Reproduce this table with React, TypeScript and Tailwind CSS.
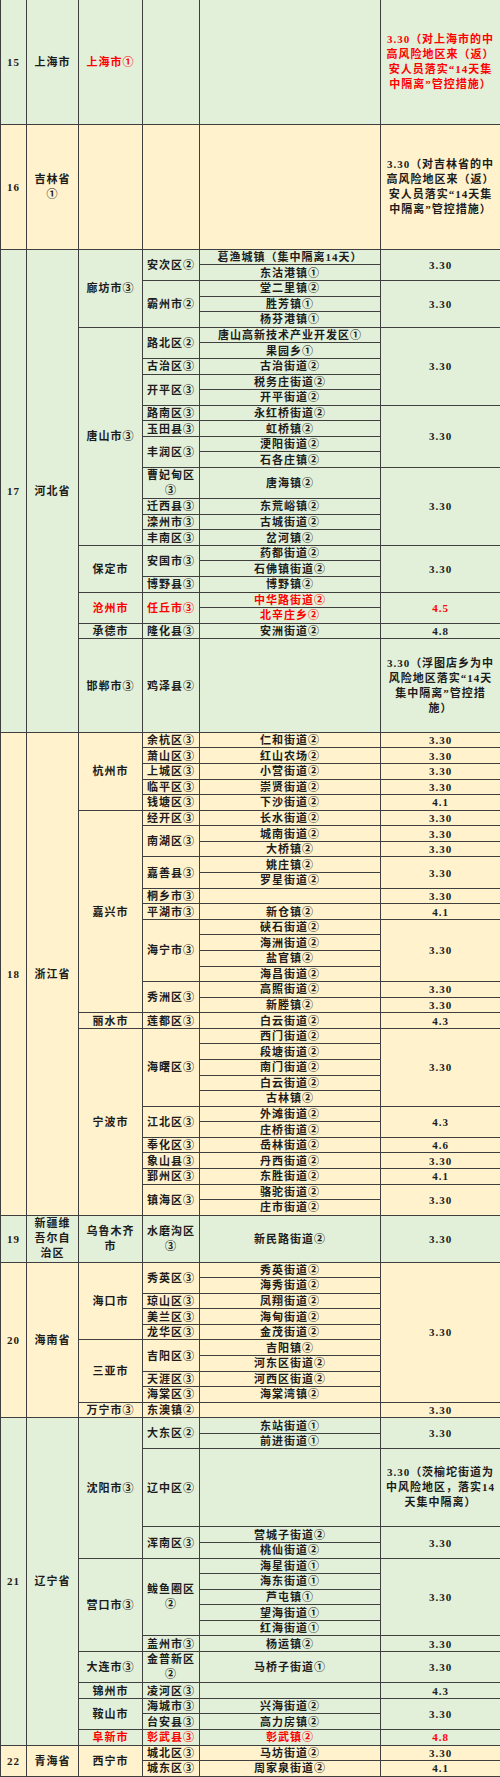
import React from 'react';

type Cell = { t: string; r?: number; red?: boolean };
type Row = { h?: number; c: Cell[] };
type Group = { bg: string; rows: Row[] };

const c = (t: string, r?: number, red?: boolean): Cell => ({ t, r, red });
const row = (...cells: Cell[]): Row => ({ c: cells });
const tall = (h: number, ...cells: Cell[]): Row => ({ h, c: cells });

const GREEN = 'bg-[#e2efd9]';
const YELLOW = 'bg-[#fff2cc]';

// 行高：每个单元行约 15.59px
const heights: Record<number, string> = {
  1: 'h-[15.59px]',
  2: 'h-[31.18px]',
  3: 'h-[46.77px]',
  5: 'h-[77.95px]',
  6: 'h-[93.53px]',
  8: 'h-[124.7px]',
};

const groups: Group[] = [
  {
    bg: GREEN,
    rows: [
      tall(8, c('15'), c('上海市'), c('上海市①', 1, true), c(''), c(''),
        c('3.30（对上海市的中\n高风险地区来（返）\n安人员落实“14天集\n中隔离”管控措施）', 1, true)),
    ],
  },
  {
    bg: YELLOW,
    rows: [
      tall(8, c('16'), c('吉林省\n①'), c(''), c(''), c(''),
        c('3.30（对吉林省的中\n高风险地区来（返）\n安人员落实“14天集\n中隔离”管控措施）')),
    ],
  },
  {
    bg: GREEN,
    rows: [
      row(c('17', 25), c('河北省', 25), c('廊坊市③', 5), c('安次区②', 2), c('葛渔城镇（集中隔离14天）'), c('3.30', 2)),
      row(c('东沽港镇①')),
      row(c('霸州市②', 3), c('堂二里镇②'), c('3.30', 3)),
      row(c('胜芳镇①')),
      row(c('杨芬港镇①')),
      row(c('唐山市③', 13), c('路北区②', 2), c('唐山高新技术产业开发区①'), c('3.30', 5)),
      row(c('果园乡①')),
      row(c('古治区③'), c('古治街道②')),
      row(c('开平区③', 2), c('税务庄街道②')),
      row(c('开平街道②')),
      row(c('路南区③'), c('永红桥街道②'), c('3.30', 4)),
      row(c('玉田县③'), c('虹桥镇②')),
      row(c('丰润区③', 2), c('浭阳街道②')),
      row(c('石各庄镇②')),
      tall(2, c('曹妃甸区\n③'), c('唐海镇②'), c('3.30', 4)),
      row(c('迁西县③'), c('东荒峪镇②')),
      row(c('滦州市③'), c('古城街道②')),
      row(c('丰南区③'), c('岔河镇②')),
      row(c('保定市', 3), c('安国市③', 2), c('药都街道②'), c('3.30', 3)),
      row(c('石佛镇街道②')),
      row(c('博野县③'), c('博野镇②')),
      row(c('沧州市', 2, true), c('任丘市③', 2, true), c('中华路街道②', 1, true), c('4.5', 2, true)),
      row(c('北辛庄乡②', 1, true)),
      row(c('承德市'), c('隆化县③'), c('安洲街道②'), c('4.8')),
      tall(6, c('邯郸市③'), c('鸡泽县②'), c(''),
        c('3.30（浮图店乡为中\n风险地区落实“14天\n集中隔离”管控措\n施）')),
    ],
  },
  {
    bg: YELLOW,
    rows: [
      row(c('18', 31), c('浙江省', 31), c('杭州市', 5), c('余杭区③'), c('仁和街道②'), c('3.30')),
      row(c('萧山区③'), c('红山农场②'), c('3.30')),
      row(c('上城区③'), c('小营街道②'), c('3.30')),
      row(c('临平区③'), c('崇贤街道②'), c('3.30')),
      row(c('钱塘区③'), c('下沙街道②'), c('4.1')),
      row(c('嘉兴市', 13), c('经开区③'), c('长水街道②'), c('3.30')),
      row(c('南湖区③', 2), c('城南街道②'), c('3.30')),
      row(c('大桥镇②'), c('3.30')),
      row(c('嘉善县③', 2), c('姚庄镇②'), c('3.30', 2)),
      row(c('罗星街道②')),
      row(c('桐乡市③'), c(''), c('3.30')),
      row(c('平湖市③'), c('新仓镇②'), c('4.1')),
      row(c('海宁市③', 4), c('硖石街道②'), c('3.30', 4)),
      row(c('海洲街道②')),
      row(c('盐官镇②')),
      row(c('海昌街道②')),
      row(c('秀洲区③', 2), c('高照街道②'), c('3.30')),
      row(c('新塍镇②'), c('3.30')),
      row(c('丽水市'), c('莲都区③'), c('白云街道②'), c('4.3')),
      row(c('宁波市', 12), c('海曙区③', 5), c('西门街道②'), c('3.30', 5)),
      row(c('段塘街道②')),
      row(c('南门街道②')),
      row(c('白云街道②')),
      row(c('古林镇②')),
      row(c('江北区③', 2), c('外滩街道②'), c('4.3', 2)),
      row(c('庄桥街道②')),
      row(c('奉化区③'), c('岳林街道②'), c('4.6')),
      row(c('象山县③'), c('丹西街道②'), c('3.30')),
      row(c('鄞州区③'), c('东胜街道②'), c('4.1')),
      row(c('镇海区③', 2), c('骆驼街道②'), c('3.30', 2)),
      row(c('庄市街道②')),
    ],
  },
  {
    bg: GREEN,
    rows: [
      tall(3, c('19'), c('新疆维\n吾尔自\n治区'), c('乌鲁木齐\n市'), c('水磨沟区\n③'), c('新民路街道②'), c('3.30')),
    ],
  },
  {
    bg: YELLOW,
    rows: [
      row(c('20', 10), c('海南省', 10), c('海口市', 5), c('秀英区③', 2), c('秀英街道②'), c('3.30', 9)),
      row(c('海秀街道②')),
      row(c('琼山区③'), c('凤翔街道②')),
      row(c('美兰区③'), c('海甸街道②')),
      row(c('龙华区③'), c('金茂街道②')),
      row(c('三亚市', 4), c('吉阳区③', 2), c('吉阳镇②')),
      row(c('河东区街道②')),
      row(c('天涯区③'), c('河西区街道②')),
      row(c('海棠区③'), c('海棠湾镇②')),
      row(c('万宁市③'), c('东澳镇②'), c(''), c('3.30')),
    ],
  },
  {
    bg: GREEN,
    rows: [
      row(c('21', 16), c('辽宁省', 16), c('沈阳市③', 5), c('大东区②', 2), c('东站街道①'), c('3.30', 2)),
      row(c('前进街道①')),
      tall(5, c('辽中区②'), c(''), c('3.30（茨榆坨街道为\n中风险地区，落实14\n天集中隔离）')),
      row(c('浑南区③', 2), c('营城子街道②'), c('3.30', 2)),
      row(c('桃仙街道②')),
      row(c('营口市③', 6), c('鲅鱼圈区\n②', 5), c('海星街道①'), c('3.30', 5)),
      row(c('海东街道①')),
      row(c('芦屯镇①')),
      row(c('望海街道①')),
      row(c('红海街道①')),
      row(c('盖州市③'), c('杨运镇②'), c('3.30')),
      tall(2, c('大连市③'), c('金普新区\n②'), c('马桥子街道①'), c('3.30')),
      row(c('锦州市'), c('凌河区③'), c(''), c('4.3')),
      row(c('鞍山市', 2), c('海城市③'), c('兴海街道②'), c('3.30', 2)),
      row(c('台安县③'), c('高力房镇②')),
      row(c('阜新市', 1, true), c('彰武县③', 1, true), c('彰武镇②', 1, true), c('4.8', 1, true)),
    ],
  },
  {
    bg: YELLOW,
    rows: [
      row(c('22', 2), c('青海省', 2), c('西宁市', 2), c('城北区③'), c('马坊街道②'), c('3.30')),
      row(c('城东区③'), c('周家泉街道②'), c('4.1')),
    ],
  },
];

export default function App() {
  return (
    <div className="w-[500px] bg-white">
      <table className="table-fixed border-collapse w-[500px] text-[11px] font-semibold text-[#1c1c1c] tracking-[1px] font-['Liberation_Serif','Noto_Sans_CJK_SC',serif]">
        <colgroup>
          <col className="w-[26px]" />
          <col className="w-[52px]" />
          <col className="w-[64px]" />
          <col className="w-[57px]" />
          <col className="w-[181px]" />
          <col className="w-[120px]" />
        </colgroup>
        {groups.map((g, gi) => (
          <tbody key={gi} className={g.bg}>
            {g.rows.map((r, ri) => (
              <tr key={ri} className={heights[r.h ?? 1]}>
                {r.c.map((cell, ci) => {
                  const multi = cell.t.includes('\n');
                  return (
                    <td
                      key={ci}
                      rowSpan={cell.r}
                      className={
                        'border border-[#3f3f3f] p-0 text-center align-middle whitespace-pre overflow-hidden ' +
                        (multi ? 'leading-[15px] ' : 'leading-[14px] ') +
                        (gi === 0 ? 'border-t-0 ' : '') +
                        (cell.red ? 'text-[#ff0000]' : '')
                      }
                    >
                      {cell.t}
                    </td>
                  );
                })}
              </tr>
            ))}
          </tbody>
        ))}
      </table>
    </div>
  );
}
